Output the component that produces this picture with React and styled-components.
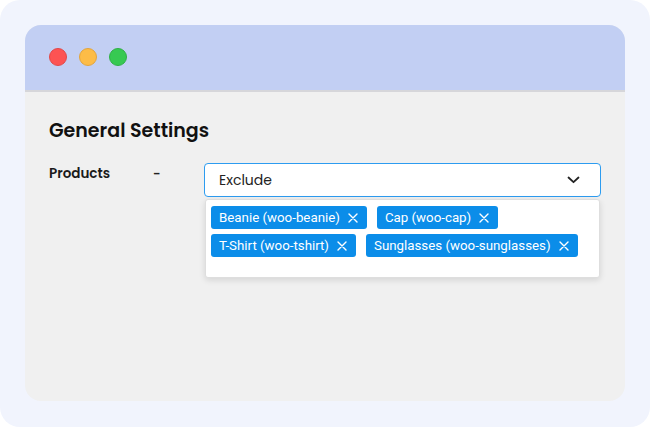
import React from 'react'
import styled, { createGlobalStyle } from 'styled-components'

const GlobalStyle = createGlobalStyle`
  html, body {
    margin: 0;
    padding: 0;
    background: #ffffff;
  }
  * { box-sizing: border-box; }
`

const Frame = styled.div`
  width: 650px;
  height: 427px;
  background: #f1f4fd;
  border-radius: 20px;
  padding: 25px 25px 26px 25px;
`

const Window = styled.div`
  height: 100%;
  background: #f0f0f0;
  border-radius: 16px;
  overflow: hidden;
  display: flex;
  flex-direction: column;
`

const TitleBar = styled.div`
  height: 67px;
  flex-shrink: 0;
  background: #c2cff3;
  border-bottom: 2px solid #d6d6da;
  display: flex;
  align-items: center;
  gap: 12px;
  padding: 0 0 2px 24px;
`

const Dot = styled.span`
  width: 18px;
  height: 18px;
  border-radius: 50%;
  background: ${p => p.$color};
  border: 1px solid ${p => p.$edge};
`

const Body = styled.div`
  padding: 24px 24px 0 24px;
  font-family: 'Poppins', 'Inter', 'Noto Sans', sans-serif;
`

const Title = styled.h2`
  margin: 0 0 18px 0;
  font-size: 19px;
  font-weight: 600;
  color: #111;
`

const Row = styled.div`
  display: flex;
  align-items: flex-start;
`

const Label = styled.div`
  width: 104px;
  font-size: 13.5px;
  font-weight: 600;
  color: #1a1a1a;
  padding-top: 1px;
`

const Dash = styled.div`
  width: 51px;
  font-size: 13px;
  font-weight: 600;
  color: #222;
  padding-top: 1px;
`

const Field = styled.div`
  width: 397px;
`

const Select = styled.div`
  height: 34px;
  background: #fff;
  border: 1px solid #2d9cf0;
  border-radius: 4px;
  display: flex;
  align-items: center;
  justify-content: space-between;
  padding: 0 20px 0 14px;
  font-size: 14px;
  color: #222;
`

const Menu = styled.div`
  margin: 2px 1px 0 1px;
  height: 79px;
  background: #fff;
  border: 1px solid #dedede;
  border-radius: 3px;
  box-shadow: 0 2px 6px rgba(0, 0, 0, 0.12);
  padding: 6px 5px;
  display: flex;
  flex-wrap: wrap;
  align-content: flex-start;
  gap: 5px 10px;
`

const Tag = styled.span`
  height: 23px;
  display: inline-flex;
  align-items: center;
  gap: 8px;
  padding: 0 9px 0 8px;
  background: #0b8de9;
  color: #fff;
  border-radius: 3px;
  font-family: 'Roboto', 'Liberation Sans', sans-serif;
  font-size: 13.3px;
  white-space: nowrap;
`

const Close = styled.svg`
  width: 10px;
  height: 10px;
`

const tags = [
  'Beanie (woo-beanie)',
  'Cap (woo-cap)',
  'T-Shirt (woo-tshirt)',
  'Sunglasses (woo-sunglasses)',
]

export default function App() {
  return (
    <>
      <GlobalStyle />
      <Frame>
        <Window>
          <TitleBar>
            <Dot $color="#fd5353" $edge="#e24848" />
            <Dot $color="#fdbc47" $edge="#e3a53c" />
            <Dot $color="#37c952" $edge="#2fb045" />
          </TitleBar>
          <Body>
            <Title>General Settings</Title>
            <Row>
              <Label>Products</Label>
              <Dash>-</Dash>
              <Field>
                <Select>
                  <span>Exclude</span>
                  <svg width="13" height="8" viewBox="0 0 13 8">
                    <path d="M1.5 1.5 L6.5 6.2 L11.5 1.5" fill="none" stroke="#222" strokeWidth="1.8" strokeLinecap="round" strokeLinejoin="round" />
                  </svg>
                </Select>
                <Menu>
                  {tags.map(t => (
                    <Tag key={t}>
                      {t}
                      <Close viewBox="0 0 10 10">
                        <path d="M1 1 L9 9 M9 1 L1 9" stroke="#fff" strokeWidth="1.4" strokeLinecap="round" />
                      </Close>
                    </Tag>
                  ))}
                </Menu>
              </Field>
            </Row>
          </Body>
        </Window>
      </Frame>
    </>
  )
}
